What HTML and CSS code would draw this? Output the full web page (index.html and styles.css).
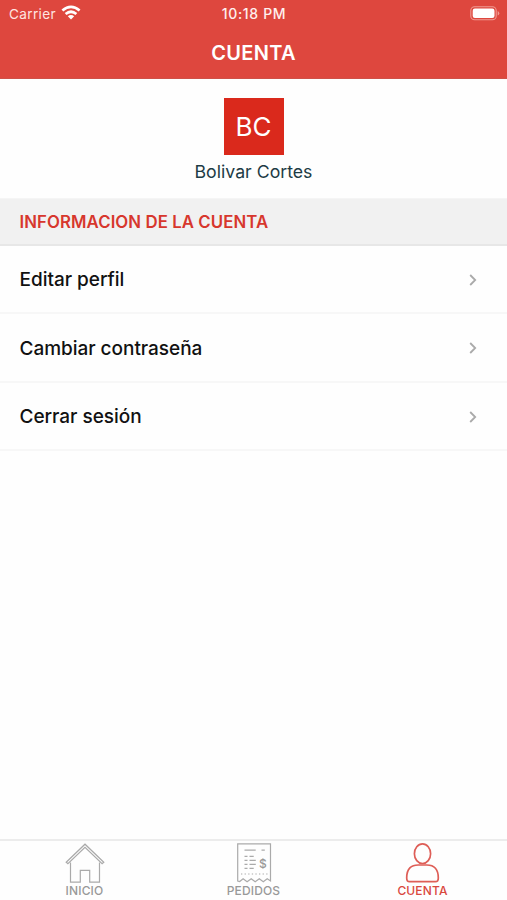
FILE: index.html
```html
<!DOCTYPE html>
<html lang="es">
<head>
<meta charset="utf-8">
<title>Cuenta</title>
<link rel="stylesheet" href="styles.css">
</head>
<body>
<div class="app">
  <header class="header">
    <div class="status">
      <div class="carrier"><span class="carrier-name">Carrier</span>
        <svg width="20" height="15" viewBox="0 0 20 15" fill="none" stroke="#fff" stroke-width="2.7"><path d="M1.4 5.6Q10 -1.8 18.6 5.6M4.6 9Q10 4.5 15.4 9"/><path d="M10 14.4 6.8 11.2Q10 8.7 13.2 11.2Z" fill="#fff" stroke="none"/></svg>
      </div>
      <span class="time">10:18 PM</span>
      <svg class="battery" width="30" height="15" viewBox="0 0 30 15"><rect x=".8" y=".8" width="25.4" height="12.9" rx="3.8" fill="none" stroke="#f09a92" stroke-width="1.1"/><rect x="2.7" y="2.6" width="21.8" height="9.3" rx="2.2" fill="#fff"/><path d="M27.7 5v4.6q1.6-.7 1.6-2.3T27.7 5" fill="#f09a92"/></svg>
    </div>
    <h1 class="title">CUENTA</h1>
  </header>
  <section class="profile">
    <div class="avatar"><span>BC</span></div>
    <div class="name">Bolivar Cortes</div>
  </section>
  <h2 class="section"><span>INFORMACION DE LA CUENTA</span></h2>
  <main class="list">
    <div class="row"><span class="edit">Editar perfil</span><svg class="chev" width="8" height="12" viewBox="0 0 8 12"><path d="m1.2 1 5 5-5 5"/></svg></div>
    <div class="row"><span class="password">Cambiar contraseña</span><svg class="chev" width="8" height="12" viewBox="0 0 8 12"><path d="m1.2 1 5 5-5 5"/></svg></div>
    <div class="row"><span class="logout">Cerrar sesión</span><svg class="chev" width="8" height="12" viewBox="0 0 8 12"><path d="m1.2 1 5 5-5 5"/></svg></div>
  </main>
  <nav class="tabs">
    <div class="tab">
      <svg width="42" height="42" viewBox="0 0 42 42"><path d="M2.2 21.2 21 3.2l18.8 18-1.7 1.5L21 6.4 3.9 22.7Z"/><path d="M6.5 21.5v19.7h9.8V29.4h9.4v11.8h9.8V21.5"/></svg>
      <span class="inicio">INICIO</span>
    </div>
    <div class="tab">
      <svg width="42" height="42" viewBox="0 0 42 42"><path d="M4.7 40V2.8h32.8V40l-3.3-2.2-3.9 3-4-3-4.1 3-4-3-4.1 3-4-3-3.4 2.7Z"/><path d="M11.5 9.2h11.2M28.5 9.2h3.3M11.5 15.4h3M16.5 15.4h4.2M11.5 19.4h3M16.5 19.4h6.3M11.5 23.4h3M16.5 23.4h6.3M11.5 27.4h3M16.5 27.4h4.2"/><path d="M8 33h27" stroke-dasharray="1.3 2.3"/><text x="25.9" y="26.7">$</text></svg>
      <span class="pedidos">PEDIDOS</span>
    </div>
    <div class="tab active">
      <svg width="42" height="42" viewBox="0 0 42 42"><ellipse cx="20.5" cy="12.7" rx="8.1" ry="9.8"/><path d="M4.7 37c0-9.5 4.6-13 11.5-13h8.6c6.9 0 11.5 3.5 11.5 13 0 2.5-.9 3.7-2.9 3.7H7.6c-2 0-2.9-1.2-2.9-3.7Z"/></svg>
      <span class="cuenta">CUENTA</span>
    </div>
  </nav>
</div>
</body>
</html>
```

FILE: styles.css
```css
* { box-sizing: border-box; }
body { margin: 0; background: #fefefe; font-family: Inter, "Liberation Sans", sans-serif; color: #111; }
.app { height: 900px; display: flex; flex-direction: column; }
svg { display: block; flex: none; }
span { white-space: nowrap; }
.header { height: 79px; background: #de473e; color: #fff; border-bottom: 1px solid #cf5148; }
.status { height: 27px; padding: 1px 7px 0 9px; display: grid; grid-template-columns: 1fr auto 1fr; align-items: center; font-size: 13.6px; line-height: 26px; }
.carrier { display: flex; align-items: center; gap: 5px; color: #ffe5e1; }
.carrier-name { width: 47px; letter-spacing: .35px; }
.carrier svg { margin-top: -3px; }
.time { font-size: 14px; font-weight: 500; letter-spacing: .65px; margin-right: 1px; color: #fff0ee; }
.battery { justify-self: end; margin-top: -2px; }
.title { margin: 0; line-height: 52px; font-size: 20px; font-weight: 600; text-align: center; letter-spacing: .3px; }
.profile { height: 119px; padding-top: 19px; display: flex; flex-direction: column; align-items: center; }
.avatar { width: 60px; height: 57px; background: #da291c; color: #fff; font-size: 26px; line-height: 58px; text-align: center; }
.name { margin-top: 3px; line-height: 28px; font-size: 17.7px; color: #1d3b45; }
.section { margin: 0; height: 48px; padding-left: 19.5px; background: #f1f1f1; border-top: 1px solid #f5f5f5; border-bottom: 2px solid #e7e7e7; line-height: 46px; font-size: 16.8px; font-weight: 600; letter-spacing: .08px; color: #d7372d; }
.list { flex: 1; }
.row { height: 68.3px; padding: 1px 30px 0 19.5px; display: flex; align-items: center; justify-content: space-between; border-bottom: 2px solid #f7f7f7; font-size: 19px; font-weight: 500; letter-spacing: -.03px; }
.row:nth-child(n+2) { padding-top: 2px; }
.chev { fill: none; stroke: #aaa; stroke-width: 1.8; }
.tabs { height: 61px; border-top: 2px solid #ececec; display: grid; grid-template-columns: repeat(3, 1fr); }
.tab { display: flex; flex-direction: column; align-items: center; color: #999; font-size: 12px; font-weight: 500; line-height: 14px; letter-spacing: .15px; }
.tab svg { fill: none; stroke: #aaa; stroke-width: 1.2; }
.tab svg text { font-size: 12px; fill: #999; stroke: none; }
.tab span { margin-top: 1px; }
.tab.active { color: #d9483e; }
.tab.active svg { stroke: #de5e57; stroke-width: 1.7; }
```
